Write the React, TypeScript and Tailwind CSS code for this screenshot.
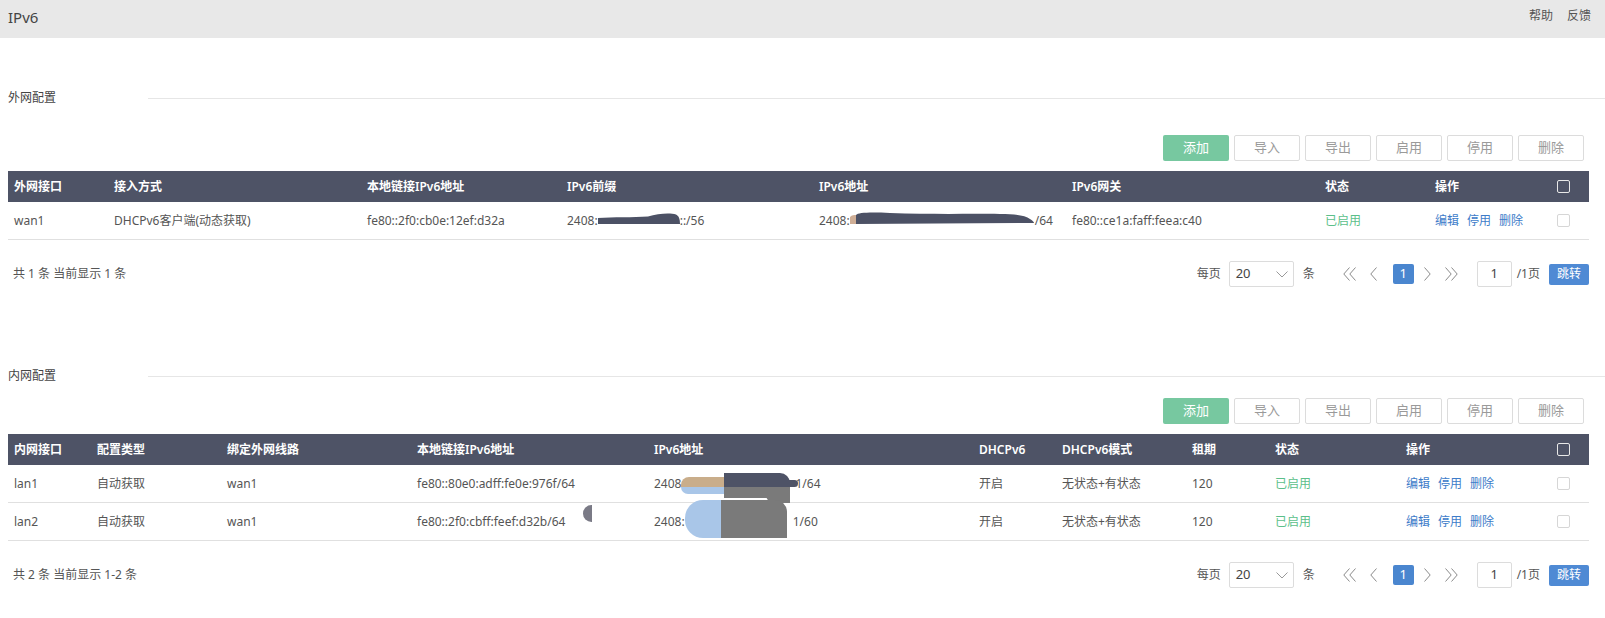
import React from "react";

const FONT = "font-['Noto_Sans','Noto_Sans_CJK_SC',sans-serif]";

function DoubleLeft() {
  return (
    <svg width="13" height="14" viewBox="0 0 13 14" fill="none" stroke="#8a8a8a" strokeWidth="1">
      <path d="M6.5 0.5 L0.8 7 L6.5 13.5" />
      <path d="M12.5 0.5 L6.8 7 L12.5 13.5" />
    </svg>
  );
}
function DoubleRight() {
  return (
    <svg width="13" height="14" viewBox="0 0 13 14" fill="none" stroke="#8a8a8a" strokeWidth="1">
      <path d="M0.5 0.5 L6.2 7 L0.5 13.5" />
      <path d="M6.5 0.5 L12.2 7 L6.5 13.5" />
    </svg>
  );
}
function Left() {
  return (
    <svg width="7" height="14" viewBox="0 0 7 14" fill="none" stroke="#8a8a8a" strokeWidth="1">
      <path d="M6.5 0.5 L0.8 7 L6.5 13.5" />
    </svg>
  );
}
function Right() {
  return (
    <svg width="7" height="14" viewBox="0 0 7 14" fill="none" stroke="#8a8a8a" strokeWidth="1">
      <path d="M0.5 0.5 L6.2 7 L0.5 13.5" />
    </svg>
  );
}

function Toolbar() {
  return (
    <div className="flex justify-end gap-[5px] pr-[5px]">
      <button className="w-[66px] h-[26px] bg-[#77c8a0] text-white text-[13px] rounded-[2px]">添加</button>
      {["导入", "导出", "启用", "停用", "删除"].map((t) => (
        <button
          key={t}
          className="w-[66px] h-[26px] border border-[#dcdcdc] bg-white text-[#9a9a9a] text-[13px] rounded-[2px]"
        >
          {t}
        </button>
      ))}
    </div>
  );
}

function Pager({ summary }: { summary: string }) {
  return (
    <div className="flex items-center justify-between h-[26px] text-[12px] text-[#555]">
      <span className="pl-[5px]">{summary}</span>
      <div className="flex items-center h-[26px]">
        <span>每页</span>
        <div className="ml-[8px] w-[65px] h-[26px] border border-[#dcdcdc] rounded-[2px] flex items-center justify-between pl-[6px] pr-[5px]">
          <span className="text-[13px] text-[#444]">20</span>
          <svg width="12" height="7" viewBox="0 0 12 7" fill="none" stroke="#999" strokeWidth="1">
            <path d="M0.5 0.5 L6 6 L11.5 0.5" />
          </svg>
        </div>
        <span className="ml-[9px]">条</span>
        <span className="ml-[28px] flex"><DoubleLeft /></span>
        <span className="ml-[14px] flex"><Left /></span>
        <span className="ml-[16px] w-[21px] h-[20px] bg-[#4a86cf] text-white rounded-[2px] flex items-center justify-center text-[13px]">1</span>
        <span className="ml-[10px] flex"><Right /></span>
        <span className="ml-[14px] flex"><DoubleRight /></span>
        <div className="ml-[19px] w-[35px] h-[26px] border border-[#dcdcdc] rounded-[2px] flex items-center justify-center text-[13px] text-[#444]">1</div>
        <span className="ml-[5px]">/1页</span>
        <button className="ml-[9px] w-[40px] h-[21px] bg-[#4f8ad4] text-white text-[12px] rounded-[2px]">跳转</button>
      </div>
    </div>
  );
}

function SectionTitle({ title }: { title: string }) {
  return (
    <div className="flex items-center h-[20px] pl-[8px]">
      <span className="w-[140px] text-[12px] text-[#444]">{title}</span>
      <div className="flex-1 h-px bg-[#e6e6e6]" />
    </div>
  );
}

function HeadBox() {
  return <span className="w-[13px] h-[13px] border border-[#e8e8e8] rounded-[2px]" />;
}
function RowBox() {
  return <span className="w-[13px] h-[13px] border border-[#d6d6d6] rounded-[2px] bg-white" />;
}

function Ops() {
  return (
    <div className="flex gap-[8px] text-[#3d7cc9]">
      <span>编辑</span>
      <span>停用</span>
      <span>删除</span>
    </div>
  );
}

const H = "pl-[6px] h-[31px] flex items-center";
const C = "pl-[6px] h-[37px] flex items-center relative";

function Table1() {
  const heads = ["外网接口", "接入方式", "本地链接IPv6地址", "IPv6前缀", "IPv6地址", "IPv6网关", "状态", "操作"];
  return (
    <div>
      <div className="grid grid-cols-[100px_253px_200px_252px_253px_253px_110px_121px_1fr] bg-[#4e5366] text-white text-[12px] font-semibold">
        {heads.map((h) => (
          <div key={h} className={H}>{h}</div>
        ))}
        <div className="pl-[7px] h-[31px] flex items-center"><HeadBox /></div>
      </div>
      <div className="grid grid-cols-[100px_253px_200px_252px_253px_253px_110px_121px_1fr] text-[12px] text-[#555] border-b border-[#e0e0e0]">
        <div className={C}>wan1</div>
        <div className={C}>DHCPv6客户端(动态获取)</div>
        <div className={C}>fe80::2f0:cb0e:12ef:d32a</div>
        <div className={C}>
          <span>2408:</span>
          <span className="relative inline-block w-[82px] h-[18px]">
            <svg className="absolute left-0 top-0" width="82" height="18" viewBox="0 0 82 18">
              <path d="M0 6 C 15 5, 35 5.5, 50 4.5 C 60 1.5, 72 0.5, 78 2.5 C 81 4, 82 7, 82 12 L0 12 Z" fill="#4c5165" />
            </svg>
          </span>
          <span>::/56</span>
        </div>
        <div className={C}>
          <span>2408:</span>
          <span className="relative inline-block w-[185px] h-[18px]">
            <svg className="absolute left-0 top-0" width="185" height="18" viewBox="0 0 185 18">
              <path d="M0 5 C 2 3, 4 3, 6 3 L6 12 L0 12 Z" fill="#cfae96" />
              <path d="M6 3 C 8 0.5, 20 0, 40 1 C 80 2.5, 120 1.5, 150 2 C 165 2, 175 3, 180 7 C 183 9, 184 10, 184 11 L6 12 Z" fill="#4c5165" />
            </svg>
          </span>
          <span>/64</span>
        </div>
        <div className={C}>fe80::ce1a:faff:feea:c40</div>
        <div className={`${C} text-[#5cbf8a]`}>已启用</div>
        <div className={C}><Ops /></div>
        <div className="pl-[7px] h-[37px] flex items-center"><RowBox /></div>
      </div>
    </div>
  );
}

function Row2({ idx }: { idx: number }) {
  const first = idx === 1;
  return (
    <div className="grid grid-cols-[83px_130px_190px_237px_325px_83px_130px_83px_131px_150px_1fr] text-[12px] text-[#555] border-b border-[#e0e0e0]">
      <div className={C}>{first ? "lan1" : "lan2"}</div>
      <div className={C}>自动获取</div>
      <div className={C}>wan1</div>
      <div className={C}>
        {first ? "fe80::80e0:adff:fe0e:976f/64" : "fe80::2f0:cbff:feef:d32b/64"}
        {!first && (
          <span className="absolute left-[172px] top-[2px] w-[9px] h-[17px] bg-[#7a7a86] rounded-l-full" />
        )}
      </div>
      <div className={C}>
        {first ? (
          <>
            <span>2408</span>
            <span className="relative inline-block w-[114px] self-stretch">
              <span className="absolute left-0 top-[12px] w-[43px] h-[10px] bg-[#c9ad8a] rounded-tl-[8px]" />
              <span className="absolute left-0 top-[22px] w-[43px] h-[7px] bg-[#a9c6e8] rounded-bl-[8px]" />
              <span className="absolute left-[43px] top-[8px] w-[66px] h-[14px] bg-[#4e5366] rounded-tr-[10px]" />
              <span className="absolute left-[100px] top-[15px] w-[17px] h-[7px] bg-[#4e5366] rounded-r-[4px]" />
              <span className="absolute left-[43px] top-[22px] w-[66px] h-[11px] bg-[#7a7a7a]" />
              <span className="absolute left-[85px] top-[28px] w-[24px] h-[10px] bg-[#7a7a7a] rounded-bl-[8px]" />
            </span>
            <span>1/64</span>
          </>
        ) : (
          <>
            <span>2408:</span>
            <span className="relative inline-block w-[108px] self-stretch">
              <span className="absolute left-0 top-[-3px] w-[36px] h-[38px] bg-[#a9c6e8] rounded-l-[18px]" />
              <span className="absolute left-[36px] top-[-3px] w-[66px] h-[38px] bg-[#7a7a7a] rounded-tr-[12px]" />
            </span>
            <span>1/60</span>
          </>
        )}
      </div>
      <div className={C}>开启</div>
      <div className={C}>无状态+有状态</div>
      <div className={C}>120</div>
      <div className={`${C} text-[#5cbf8a]`}>已启用</div>
      <div className={C}><Ops /></div>
      <div className="pl-[7px] h-[37px] flex items-center"><RowBox /></div>
    </div>
  );
}

function Table2() {
  const heads = ["内网接口", "配置类型", "绑定外网线路", "本地链接IPv6地址", "IPv6地址", "DHCPv6", "DHCPv6模式", "租期", "状态", "操作"];
  return (
    <div>
      <div className="grid grid-cols-[83px_130px_190px_237px_325px_83px_130px_83px_131px_150px_1fr] bg-[#4e5366] text-white text-[12px] font-semibold">
        {heads.map((h) => (
          <div key={h} className={H}>{h}</div>
        ))}
        <div className="pl-[7px] h-[31px] flex items-center"><HeadBox /></div>
      </div>
      <Row2 idx={1} />
      <Row2 idx={2} />
    </div>
  );
}

export default function App() {
  return (
    <div className={`w-[1605px] h-[618px] bg-white overflow-hidden ${FONT}`}>
      <div className="h-[38px] bg-[#e8e8e8] flex items-start justify-between pl-[8px] pr-[14px]">
        <span className="mt-[6px] text-[15px] text-[#444]">IPv6</span>
        <div className="mt-[7px] flex gap-[14px] text-[12px] text-[#555]">
          <span>帮助</span>
          <span>反馈</span>
        </div>
      </div>

      <div className="pt-[50px]">
        <SectionTitle title="外网配置" />
      </div>
      <div className="pl-[8px] pr-[16px]">
        <div className="mt-[27px]"><Toolbar /></div>
        <div className="mt-[10px]"><Table1 /></div>
        <div className="mt-[21px]"><Pager summary="共 1 条 当前显示 1 条" /></div>
      </div>

      <div className="mt-[79px]">
        <SectionTitle title="内网配置" />
      </div>
      <div className="pl-[8px] pr-[16px]">
        <div className="mt-[12px]"><Toolbar /></div>
        <div className="mt-[10px]"><Table2 /></div>
        <div className="mt-[21px]"><Pager summary="共 2 条 当前显示 1-2 条" /></div>
      </div>
    </div>
  );
}
